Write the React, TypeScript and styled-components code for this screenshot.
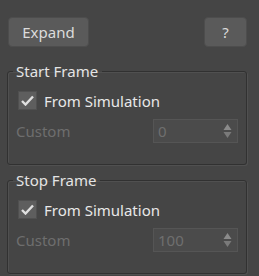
import React from 'react';
import styled, { createGlobalStyle } from 'styled-components';

const Global = createGlobalStyle`
  html, body {
    margin: 0;
    padding: 0;
    background: #454545;
  }
  body {
    font-family: "Noto Sans", "Open Sans", sans-serif;
  }
`;

const Panel = styled.div`
  width: 259px;
  height: 276px;
  box-sizing: border-box;
  padding: 17px 12px 0 7px;
  background: #454545;
`;

const Toolbar = styled.div`
  display: flex;
  justify-content: space-between;
  padding-left: 1px;
`;

const Button = styled.button<{ $w: number }>`
  width: ${p => p.$w}px;
  height: 30px;
  box-sizing: border-box;
  background: #5a5a5a;
  border: 1px solid #4d4d4d;
  border-radius: 4px;
  color: #dcdcdc;
  font-family: "Noto Sans", "Open Sans", sans-serif;
  font-size: 15px;
  padding: 0;
  cursor: pointer;
`;

const Group = styled.fieldset<{ $top: number }>`
  margin: ${p => p.$top}px 0 0 0;
  padding: 12px 8px 21px 10px;
  border: 1px solid #313131;
  border-radius: 3px;
  box-shadow: inset 1px 1px 0 #505050, 1px 1px 0 #505050;
  min-width: 0;
`;

const Legend = styled.legend`
  font-size: 15px;
  line-height: 16px;
  color: #e4e4e4;
  padding: 0 4px 0 3px;
  margin-left: -5px;
`;

const CheckRow = styled.label`
  display: flex;
  align-items: center;
  gap: 7px;
  color: #e8e8e8;
  font-size: 15px;
  height: 19px;
`;

const Box = styled.span`
  width: 19px;
  height: 19px;
  box-sizing: border-box;
  background: #5e5e5e;
  border: 1px solid #505050;
  display: flex;
  align-items: center;
  justify-content: center;
`;

const ValueRow = styled.div`
  display: flex;
  align-items: center;
  justify-content: space-between;
  margin-top: 9px;
`;

const Label = styled.span`
  margin-left: -2px;
  color: #6e6e6e;
  font-size: 15px;
`;

const Spin = styled.div`
  width: 85px;
  height: 24px;
  box-sizing: border-box;
  background: #4b4b4b;
  border: 1px solid #555555;
  display: flex;
  align-items: center;
  justify-content: space-between;
  padding: 0 5px 0 4px;
  color: #6f6f6f;
  font-size: 15px;
`;

const Frame: React.FC<{ title: string; value: string; top: number }> = ({ title, value, top }) => (
  <Group $top={top}>
    <Legend>{title}</Legend>
    <CheckRow>
      <Box>
        <svg width="13" height="11" viewBox="0 0 13 11">
          <path d="M1 6 L4.5 9.5 L12 1.5" fill="none" stroke="#e0e0e0" strokeWidth="2.4" />
        </svg>
      </Box>
      From Simulation
    </CheckRow>
    <ValueRow>
      <Label>Custom</Label>
      <Spin>
        <span>{value}</span>
        <svg width="9" height="16" viewBox="0 0 9 16">
          <path d="M4.5 1 L8.5 7 L0.5 7 Z" fill="#8a8a8a" />
          <path d="M0.5 9 L8.5 9 L4.5 15 Z" fill="#7a7a7a" />
        </svg>
      </Spin>
    </ValueRow>
  </Group>
);

export default function App() {
  return (
    <>
      <Global />
      <Panel>
        <Toolbar>
          <Button $w={81}>Expand</Button>
          <Button $w={43}>?</Button>
        </Toolbar>
        <Frame title="Start Frame" value="0" top={16} />
        <Frame title="Stop Frame" value="100" top={7} />
      </Panel>
    </>
  );
}
